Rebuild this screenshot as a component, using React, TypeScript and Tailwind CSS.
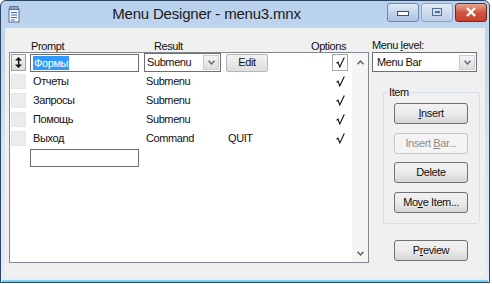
import React from 'react';

const font = { fontFamily: '"Liberation Sans", Arial, sans-serif' };

function Check() {
  return (
    <svg width="9" height="11" viewBox="0 0 9 11" className="block">
      <path d="M0.5 6.2 L2 5.2 L3.8 10 L8.3 0.5" fill="none" stroke="#111" strokeWidth="1.1" />
    </svg>
  );
}

function Chevron({ up = false, color = '#4d4d4d' }: { up?: boolean; color?: string }) {
  return (
    <svg width="7" height="5" viewBox="0 0 7 5" className="block">
      <path d={up ? 'M0.5 4.2 L3.5 1 L6.5 4.2' : 'M0.5 0.8 L3.5 4 L6.5 0.8'} fill="none" stroke={color} strokeWidth="1.4" />
    </svg>
  );
}

function DropBtn() {
  return (
    <div className="w-[16px] h-[15px] border border-[#c9c9c9] bg-gradient-to-b from-[#f2f2f2] to-[#dedede] flex items-center justify-center">
      <Chevron color="#5a6a80" />
    </div>
  );
}

function WinButton({ children, disabled = false }: { children: React.ReactNode; disabled?: boolean }) {
  return (
    <div
      className={
        disabled
          ? 'w-[74px] h-[21px] rounded-[3px] border border-[#c5c8ca] bg-[#f4f4f4] text-[#8d8d8d] flex items-center justify-center'
          : 'w-[74px] h-[21px] rounded-[3px] border border-[#707070] bg-gradient-to-b from-[#f2f2f2] via-[#ebebeb] to-[#d6d6d6] text-[#111] flex items-center justify-center'
      }
    >
      {children}
    </div>
  );
}

const rows = [
  { prompt: 'Отчеты', result: 'Submenu', cmd: '' },
  { prompt: 'Запросы', result: 'Submenu', cmd: '' },
  { prompt: 'Помощь', result: 'Submenu', cmd: '' },
  { prompt: 'Выход', result: 'Command', cmd: 'QUIT' },
];

export default function App() {
  return (
    <div className="w-[492px] h-[284px] bg-white overflow-hidden text-[11px] tracking-[-0.4px] text-[#111]" style={font}>
      <div className="w-[490px] h-[283px] border border-[#2c4462] rounded-t-[6px] bg-gradient-to-b from-[#b9d1ec] via-[#d3e2f4] to-[#e4edf8] flex flex-col">
        {/* title bar */}
        <div className="h-[26px] flex items-center pl-[7px] pr-[2px]">
          <svg width="12" height="17" viewBox="0 0 12 17" className="block">
            <rect x="1" y="3" width="10" height="13" fill="#f4f6fa" stroke="#5a6f92" strokeWidth="1" />
            <rect x="2" y="0.5" width="8" height="3" fill="#8fa3c6" stroke="#4d628a" strokeWidth="0.8" />
            <path d="M3 6.5 H9 M3 9 H9 M3 11.5 H9 M3 14 H7" stroke="#4a67a8" strokeWidth="1.1" />
          </svg>
          <div className="flex-1 text-center text-[15px] tracking-[-0.2px] text-[#1a1a1a] pl-[6px]">Menu Designer - menu3.mnx</div>
          <div className="flex items-center gap-[2px] mt-[-4px]">
            <div className="w-[32px] h-[19px] rounded-[3px] border border-[#6d86a8] bg-gradient-to-b from-[#dfe9f6] via-[#c3d5ec] to-[#a9c2e2] flex items-center justify-center">
              <div className="w-[12px] h-[5px] border border-[#3c4f6d] bg-white mt-[3px]" />
            </div>
            <div className="w-[32px] h-[19px] rounded-[3px] border border-[#8fa4c0] bg-gradient-to-b from-[#e3ecf7] via-[#cfdcee] to-[#bccfe8] flex items-center justify-center">
              <div className="w-[10px] h-[8px] border border-[#5a6f8f] flex items-center justify-center">
                <div className="w-[5px] h-[2px] bg-[#5a6f8f]" />
              </div>
            </div>
            <div className="w-[32px] h-[19px] rounded-[3px] border border-[#6b2a22] bg-gradient-to-b from-[#e8a493] via-[#d0553f] to-[#c2402b] flex items-center justify-center">
              <svg width="12" height="10" viewBox="0 0 12 10" className="block">
                <path d="M2 1 L10 9 M10 1 L2 9" stroke="#fff" strokeWidth="2.4" />
              </svg>
            </div>
          </div>
        </div>

        {/* client area */}
        <div className="flex-1 mx-[4px] mt-[1px] mb-[3px] bg-[#f0f0f0] flex gap-[3px] pt-[12px] pl-[4px]">
          {/* left: list */}
          <div className="flex flex-col w-[360px]">
            <div className="h-[12px] flex items-center leading-none">
              <span className="ml-[22px] w-[123px]">Prompt</span>
              <span className="w-[157px]">Result</span>
              <span>Options</span>
            </div>
            <div className="h-[211px] border border-[#828790] bg-white flex">
              <div className="flex-1 flex flex-col">
                {/* first row, being edited */}
                <div className="h-[19px] flex items-center">
                  <div className="ml-[1px] w-[15px] h-[17px] border border-[#a0a0a0] bg-gradient-to-b from-[#f4f4f4] to-[#dcdcdc] flex items-center justify-center">
                    <svg width="7" height="11" viewBox="0 0 7 11" className="block">
                      <path d="M3.5 0 L7 3.5 H0 Z M3.5 11 L7 7.5 H0 Z" fill="#111" />
                      <rect x="3" y="3" width="1.4" height="5" fill="#111" />
                    </svg>
                  </div>
                  <div className="ml-[4px] w-[109px] h-[18px] border border-[#6e6e6e] bg-white flex items-center pl-[2px]">
                    <span className="bg-[#3399ff] text-white px-[1px] leading-[14px]">Формы</span>
                  </div>
                  <div className="ml-[5px] w-[77px] h-[19px] border border-[#6e6e6e] bg-white flex items-center justify-between pl-[2px] pr-[1px]">
                    <span>Submenu</span>
                    <DropBtn />
                  </div>
                  <div className="ml-[5px] w-[42px] h-[18px] rounded-[2px] border border-[#b5b5b5] bg-gradient-to-b from-[#f2f2f2] to-[#dfdfdf] flex items-center justify-center">
                    Edit
                  </div>
                  <div className="ml-[64px] w-[16px] h-[17px] border border-[#a8a8a8] bg-white flex items-center justify-center">
                    <Check />
                  </div>
                </div>
                {rows.map(r => (
                  <div key={r.prompt} className="h-[19px] flex items-center">
                    <div className="ml-[1px] w-[15px] h-[15px] border border-[#e6e6e6] bg-[#ececec]" />
                    <span className="ml-[7px] w-[113px]">{r.prompt}</span>
                    <span className="w-[82px]">{r.result}</span>
                    <span className="w-[108px]">{r.cmd}</span>
                    <Check />
                  </div>
                ))}
                <div className="h-[19px] flex items-center">
                  <div className="ml-[20px] w-[109px] h-[18px] border border-[#6e6e6e] bg-white" />
                </div>
              </div>
              {/* scrollbar */}
              <div className="w-[16px] bg-[#f5f5f5] flex flex-col items-center justify-between pt-[7px] pb-[6px]">
                <Chevron up color="#606060" />
                <Chevron color="#606060" />
              </div>
            </div>
          </div>

          {/* right column */}
          <div className="flex flex-col w-[108px]">
            <div className="h-[12px] leading-none">
              Menu <span className="underline underline-offset-[1px]">l</span>evel:
            </div>
            <div className="w-[105px] h-[20px] border border-[#6e6e6e] bg-white flex items-center justify-between pl-[4px] pr-[1px]">
              <span>Menu Bar</span>
              <DropBtn />
            </div>
            <div className="ml-[11px] mt-[20px] w-[97px] h-[132px] border border-[#d5dfe5] rounded-[3px] relative flex flex-col pl-[10px] pt-[10px] gap-[8.5px]">
              <span className="absolute left-[4px] top-[-7px] bg-[#f0f0f0] px-[1px] leading-[12px]">Item</span>
              <WinButton>
                <span><span className="underline">I</span>nsert</span>
              </WinButton>
              <WinButton disabled>
                <span>Insert <span className="underline">B</span>ar...</span>
              </WinButton>
              <WinButton>Delete</WinButton>
              <WinButton>
                <span>Mo<span className="underline">v</span>e Item...</span>
              </WinButton>
            </div>
            <div className="ml-[22px] mt-[16px]">
              <WinButton>
                <span>P<span className="underline">r</span>eview</span>
              </WinButton>
            </div>
          </div>
        </div>
        <div className="h-[2px] mx-[1px] bg-[#7fd3f0]" />
      </div>
    </div>
  );
}
